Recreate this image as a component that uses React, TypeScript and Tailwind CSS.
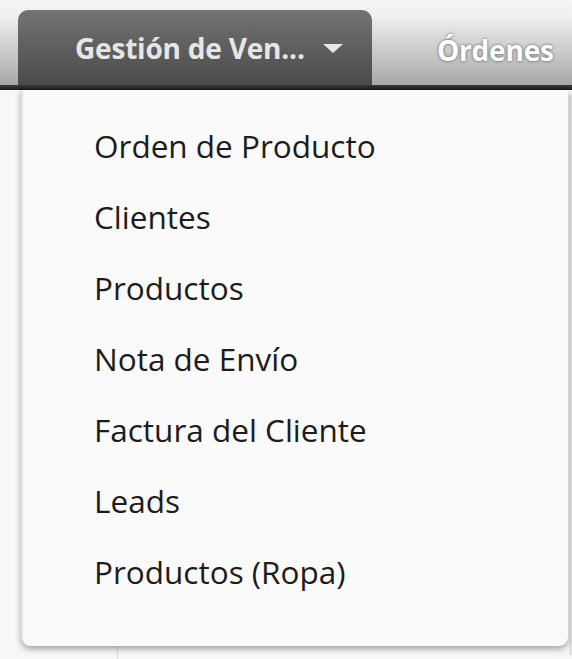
const items = [
  "Orden de Producto",
  "Clientes",
  "Productos",
  "Nota de Envío",
  "Factura del Cliente",
  "Leads",
  "Productos (Ropa)",
];

export default function App() {
  return (
    <div
      className="relative h-[659px] w-[572px] overflow-hidden bg-[#f7f7f7]"
      style={{ fontFamily: '"Open Sans", "Noto Sans", sans-serif' }}
    >
      <div className="flex h-[85px] items-end gap-[65px] bg-[linear-gradient(180deg,#f6f6f6_0%,#eeeeee_20%,#a8a8a8_100%)] pl-[18px]">
        <div className="flex h-[75px] w-[354px] items-center gap-[18px] rounded-t-[10px] bg-[linear-gradient(180deg,#737373,#4b4b4b)] pl-[57px]">
          <span className="text-[28px] font-bold tracking-[-0.2px] text-[#e6e6e6]">Gestión de Ven...</span>
          <svg width="20" height="10" viewBox="0 0 20 10" className="mt-[2px]">
            <path d="M0 0 L20 0 L10 9 Z" fill="#e6e6e6" />
          </svg>
        </div>
        <span className="mb-[14px] text-[28px] font-bold tracking-[-0.2px] text-white [text-shadow:0_0_3px_rgba(0,0,0,0.6)]">
          Órdenes
        </span>
      </div>
      <div className="h-[5px] bg-[linear-gradient(180deg,#3a3a3a,#1c1c1c)]" />
      <div className="absolute left-[117px] top-[640px] h-[30px] w-px bg-[#dddddd]" />
      <div className="absolute left-[569px] top-[95px] h-[560px] w-[3px] bg-[#e2e2e2]" />
      <div className="absolute left-[21px] top-[90px] flex h-[556px] w-[547px] flex-col rounded-b-[9px] border-l-2 border-[#e3e3e3] bg-[#fafafa] pl-[71px] pt-[35px] shadow-[0_3px_6px_rgba(0,0,0,0.35)]">
        {items.map((item) => (
          <div key={item} className="flex h-[71px] items-start text-[31.5px] leading-[42px] text-[#1c1c1c]">
            {item}
          </div>
        ))}
      </div>
    </div>
  );
}
